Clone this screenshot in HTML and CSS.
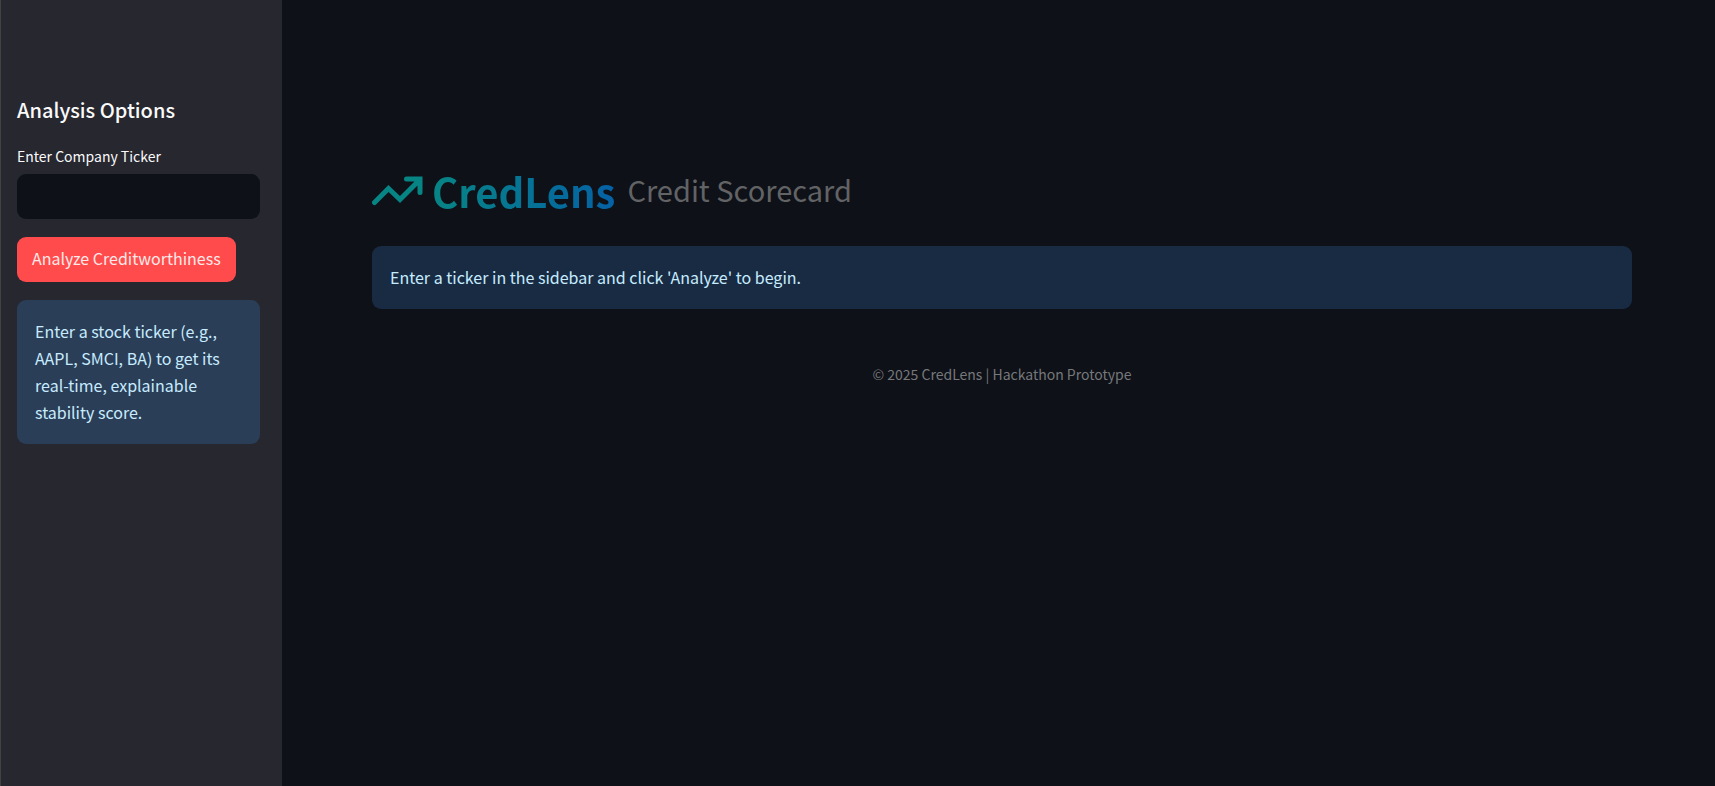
FILE: index.html
```html
<!DOCTYPE html>
<html lang="en">
<head>
<meta charset="utf-8">
<meta name="viewport" content="width=device-width, initial-scale=1">
<title>CredLens Credit Scorecard</title>
<link rel="stylesheet" href="styles.css">
</head>
<body>
<div class="app">
  <aside class="sidebar">
    <h2 class="sidebar-title">Analysis Options</h2>
    <form class="options">
      <div class="field">
        <label class="field-label" for="ticker">Enter Company Ticker</label>
        <input class="field-input" id="ticker" type="text" autocomplete="off">
      </div>
      <button class="analyze" type="button">Analyze Creditworthiness</button>
    </form>
    <p class="alert alert-sidebar">Enter a stock ticker (e.g., AAPL, SMCI, BA) to get its real-time, explainable stability score.</p>
  </aside>
  <main class="main">
    <header class="brand">
      <svg class="brand-icon" viewBox="0 0 52 30" aria-hidden="true">
        <path d="M2.5 26.500 16.500 12.500 28 23.500 47 4.500M34.500 3H48V16.500" fill="none" stroke="#078585" stroke-width="5" stroke-linecap="round" stroke-linejoin="miter"/>
      </svg>
      <h1 class="brand-name">CredLens</h1>
      <span class="brand-sub">Credit Scorecard</span>
    </header>
    <p class="alert">Enter a ticker in the sidebar and click 'Analyze' to begin.</p>
    <footer class="footer">© 2025 CredLens | Hackathon Prototype</footer>
  </main>
</div>
</body>
</html>
```
FILE: styles.css
```css
* {
  box-sizing: border-box;
}

body {
  margin: 0;
  background: #0e1118;
  color: #fafafa;
  font-family: "Noto Sans CJK SC", "Open Sans", sans-serif;
  font-size: 16px;
  line-height: 27px;
}

h1, h2, p {
  margin: 0;
}

.app {
  display: flex;
  min-height: 100vh;
}

.sidebar {
  flex: 0 0 282px;
  padding: 96px 22px 24px 16px;
  border-left: 1px solid #42433f;
  background: #272730;
}

.sidebar-title {
  margin-bottom: 20px;
  font-size: 20px;
  font-weight: 500;
  line-height: 28px;
}

.options {
  display: flex;
  flex-direction: column;
  align-items: flex-start;
  gap: 18px;
  margin-bottom: 18px;
}

.field {
  width: 100%;
}

.field-label {
  display: block;
  margin-bottom: 6px;
  font-size: 14px;
  line-height: 24px;
}

.field-input {
  display: block;
  width: 100%;
  height: 45px;
  padding: 0 15px;
  border: 0;
  border-radius: 9px;
  background: #0e1118;
  color: inherit;
  font: inherit;
}

.analyze {
  height: 45px;
  padding: 0 15px 2px;
  border: 0;
  border-radius: 9px;
  background: #ff4b4b;
  color: #ffe9e9;
  font: inherit;
  white-space: nowrap;
}

.alert {
  padding: 18px;
  border-radius: 9px;
  background: #182b43;
  color: #c7ebff;
}

.alert-sidebar {
  background: #2a3e57;
}

.main {
  flex: 1;
  min-width: 0;
  padding: 165px 83px 24px 90px;
}

.brand {
  display: flex;
  align-items: center;
  margin-bottom: 29px;
}

.brand-icon {
  width: 52px;
  height: 30px;
  margin-right: 8px;
}

.brand-name {
  margin-right: 12px;
  background: linear-gradient(90deg, #078585, #0561a5);
  background-clip: text;
  -webkit-background-clip: text;
  color: transparent;
  font-size: 40px;
  font-weight: 700;
  line-height: 52px;
}

.brand-sub {
  padding-bottom: 4px;
  color: #626365;
  font-size: 29px;
  font-weight: 400;
  line-height: 48px;
}

.footer {
  margin-top: 52px;
  color: #77787a;
  font-size: 14px;
  text-align: center;
}
```
